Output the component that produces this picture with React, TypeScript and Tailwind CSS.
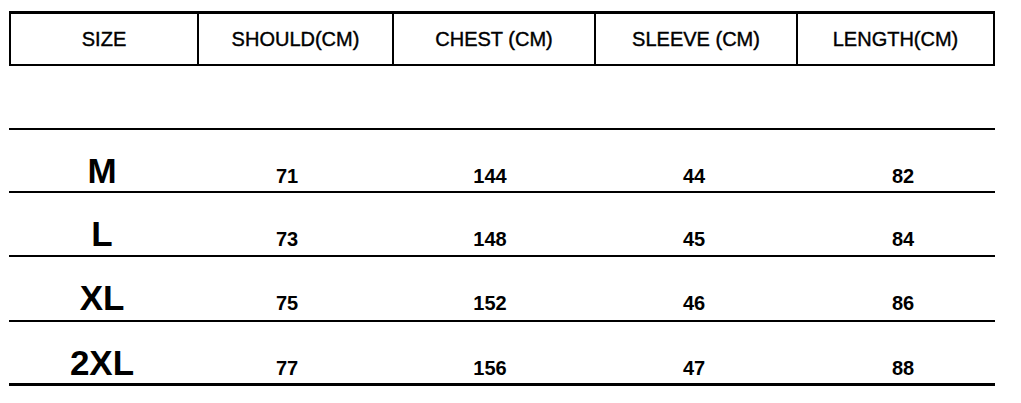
const headers = ["SIZE", "SHOULD(CM)", "CHEST (CM)", "SLEEVE (CM)", "LENGTH(CM)"];

const rows = [
  { size: "M", values: ["71", "144", "44", "82"], h: "h-[63px]" },
  { size: "L", values: ["73", "148", "45", "84"], h: "h-[64px]" },
  { size: "XL", values: ["75", "152", "46", "86"], h: "h-[65px]" },
  { size: "2XL", values: ["77", "156", "47", "88"], h: "h-[64px]" },
];

export default function App() {
  return (
    <div className="w-[1021px] h-[403px] bg-white text-black font-['Liberation_Sans',Arial,sans-serif] pt-[11px] pl-[9px]">
      {/* header box */}
      <div className="w-[986px] h-[55px] border-2 border-t-[3px] border-black grid grid-cols-[186px_195px_202px_202px_197px]">
        {headers.map((h, i) => (
          <div
            key={h}
            className={`flex items-center justify-center text-[20px] leading-none [-webkit-text-stroke:0.4px_black] ${i > 0 ? "border-l-2 border-black" : ""}`}
          >
            {h}
          </div>
        ))}
      </div>

      {/* body rows */}
      <div className="mt-[62px] w-[986px] border-t-2 border-black">
        {rows.map((r, idx) => (
          <div
            key={r.size}
            className={`${r.h} grid grid-cols-[186px_184px_222px_186px_208px] items-baseline pt-[23px] border-black ${idx === rows.length - 1 ? "border-b-[3px]" : "border-b-2"}`}
          >
            <div className="text-center text-[35px] font-bold leading-none">{r.size}</div>
            {r.values.map((v, i) => (
              <div
                key={i}
                className={`text-center text-[20px] font-bold leading-none ${i === 3 ? "pl-6" : ""}`}
              >
                {v}
              </div>
            ))}
          </div>
        ))}
      </div>
    </div>
  );
}
